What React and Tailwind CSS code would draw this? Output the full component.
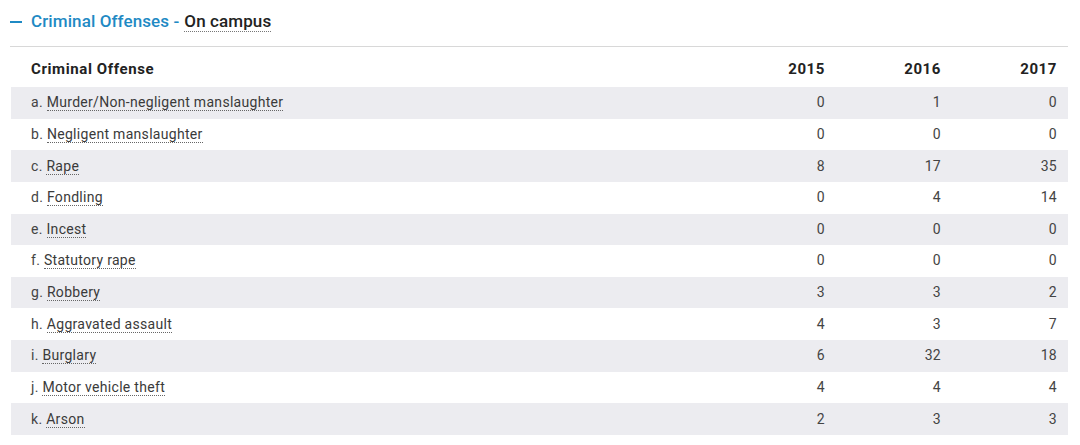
import React from "react";

const rows = [
  ["a.", "Murder/Non-negligent manslaughter", 0, 1, 0],
  ["b.", "Negligent manslaughter", 0, 0, 0],
  ["c.", "Rape", 8, 17, 35],
  ["d.", "Fondling", 0, 4, 14],
  ["e.", "Incest", 0, 0, 0],
  ["f.", "Statutory rape", 0, 0, 0],
  ["g.", "Robbery", 3, 3, 2],
  ["h.", "Aggravated assault", 4, 3, 7],
  ["i.", "Burglary", 6, 32, 18],
  ["j.", "Motor vehicle theft", 4, 4, 4],
  ["k.", "Arson", 2, 3, 3],
];

export default function App() {
  return (
    <div className="w-[1080px] h-[445px] bg-white overflow-hidden" style={{ fontFamily: "Roboto, 'Liberation Sans', sans-serif" }}>
      <div className="pl-[10px] pr-[12px] pt-[10px]">
        <div className="flex items-center h-[24px] text-[17px] font-medium tracking-[0.1px]">
          <span className="inline-block w-[12px] h-[2px] bg-[#1f8ac4] mr-[9px]"></span>
          <span className="text-[#1f8ac4]">Criminal Offenses -</span>
          <span className="ml-[5px] text-[#222] border-b border-dotted border-[#777] leading-[19px]">On campus</span>
        </div>
        <div className="mt-[12px] border-t border-[#d8d8d8]"></div>
        <div className="pl-[1px]">
          <div className="flex items-center h-[40px] pt-[4px] text-[15px] font-bold text-[#222] tracking-[0.6px]">
            <div className="flex-1 pl-[20px]">Criminal Offense</div>
            <div className="w-[116px] text-right pr-[11px]">2015</div>
            <div className="w-[116px] text-right pr-[11px]">2016</div>
            <div className="w-[116px] text-right pr-[11px]">2017</div>
          </div>
          {rows.map((r, i) => (
            <div key={i} className={"flex items-center h-[31.64px] text-[14px] tracking-[0.3px] text-[#444] " + (i % 2 === 0 ? "bg-[#ececf0]" : "bg-white")}>
              <div className="flex-1 pl-[20px]">
                <span>{r[0]} </span>
                <span className="text-[#3a3a3a] border-b border-dotted border-[#666] leading-[16px] inline-block">{r[1]}</span>
              </div>
              <div className="w-[116px] text-right pr-[11px]">{r[2]}</div>
              <div className="w-[116px] text-right pr-[11px]">{r[3]}</div>
              <div className="w-[116px] text-right pr-[11px]">{r[4]}</div>
            </div>
          ))}
        </div>
      </div>
    </div>
  );
}
